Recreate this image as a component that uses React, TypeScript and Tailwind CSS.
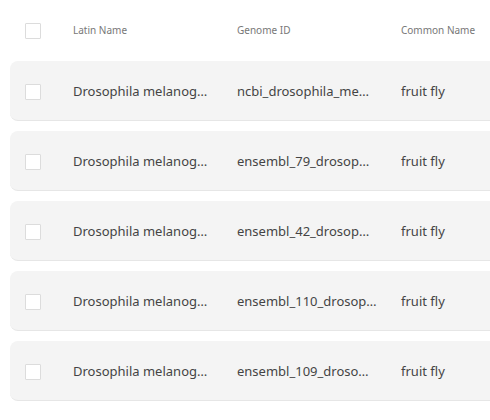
import React from 'react';

const rows = [
  { latin: 'Drosophila melanog…', genome: 'ncbi_drosophila_me…', common: 'fruit fly' },
  { latin: 'Drosophila melanog…', genome: 'ensembl_79_drosop…', common: 'fruit fly' },
  { latin: 'Drosophila melanog…', genome: 'ensembl_42_drosop…', common: 'fruit fly' },
  { latin: 'Drosophila melanog…', genome: 'ensembl_110_drosop…', common: 'fruit fly' },
  { latin: 'Drosophila melanog…', genome: 'ensembl_109_droso…', common: 'fruit fly' },
];

function Checkbox() {
  return <div className="w-4 h-4 border border-[#dcdcdc] bg-white rounded-[1px]" />;
}

export default function App() {
  return (
    <div
      className="w-[490px] h-[420px] overflow-hidden bg-white pl-[10px]"
      style={{ fontFamily: '"Noto Sans", "Open Sans", sans-serif' }}
    >
      {/* Header */}
      <div className="flex items-center h-[61px] w-[560px] pl-[15px] text-[10px] text-[#777]">
        <div className="w-[48px]">
          <Checkbox />
        </div>
        <div className="w-[164px]">Latin Name</div>
        <div className="w-[164px]">Genome ID</div>
        <div className="w-[164px]">Common Name</div>
      </div>

      {/* Rows */}
      <div className="flex flex-col gap-[10px]">
        {rows.map((r, i) => (
          <div
            key={i}
            className="flex items-center h-[60px] w-[560px] pl-[15px] pt-[2px] bg-[#f4f4f4] rounded-lg border-b border-[#e6e6e6] text-[13px] text-[#444]"
          >
            <div className="w-[48px]">
              <Checkbox />
            </div>
            <div className="w-[164px] whitespace-nowrap">{r.latin}</div>
            <div className="w-[164px] whitespace-nowrap">{r.genome}</div>
            <div className="w-[164px] whitespace-nowrap">{r.common}</div>
          </div>
        ))}
      </div>
    </div>
  );
}
